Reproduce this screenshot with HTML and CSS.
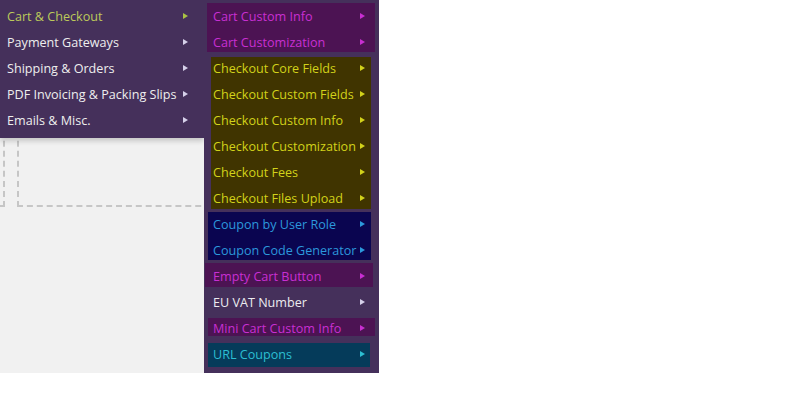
FILE: index.html
```html
<!DOCTYPE html>
<html>
<head>
<meta charset="utf-8">
<link rel="stylesheet" href="styles.css">
</head>
<body>
<div class="screen">
  <div class="content">
    <div class="dash dash-a"></div>
    <div class="dash dash-b"></div>
  </div>

  <ul class="menu">
    <li class="item current"><span>Cart &amp; Checkout</span><i class="arr"></i></li>
    <li class="item"><span>Payment Gateways</span><i class="arr"></i></li>
    <li class="item"><span>Shipping &amp; Orders</span><i class="arr"></i></li>
    <li class="item"><span>PDF Invoicing &amp; Packing Slips</span><i class="arr"></i></li>
    <li class="item"><span>Emails &amp; Misc.</span><i class="arr"></i></li>
  </ul>

  <div class="sub">
    <ul class="grp g-cart">
      <li class="sitem"><span>Cart Custom Info</span><i class="arr"></i></li>
      <li class="sitem"><span>Cart Customization</span><i class="arr"></i></li>
    </ul>
    <ul class="grp g-check">
      <li class="sitem"><span>Checkout Core Fields</span><i class="arr"></i></li>
      <li class="sitem"><span>Checkout Custom Fields</span><i class="arr"></i></li>
      <li class="sitem"><span>Checkout Custom Info</span><i class="arr"></i></li>
      <li class="sitem"><span>Checkout Customization</span><i class="arr"></i></li>
      <li class="sitem"><span>Checkout Fees</span><i class="arr"></i></li>
      <li class="sitem"><span>Checkout Files Upload</span><i class="arr"></i></li>
    </ul>
    <ul class="grp g-coupon">
      <li class="sitem"><span>Coupon by User Role</span><i class="arr"></i></li>
      <li class="sitem"><span>Coupon Code Generator</span><i class="arr"></i></li>
    </ul>
    <ul class="grp g-empty">
      <li class="sitem"><span>Empty Cart Button</span><i class="arr"></i></li>
    </ul>
    <ul class="grp g-vat">
      <li class="sitem"><span>EU VAT Number</span><i class="arr"></i></li>
    </ul>
    <ul class="grp g-mini">
      <li class="sitem"><span>Mini Cart Custom Info</span><i class="arr"></i></li>
    </ul>
    <ul class="grp g-url">
      <li class="sitem"><span>URL Coupons</span><i class="arr"></i></li>
    </ul>
  </div>
</div>
</body>
</html>
```

FILE: styles.css
```css
* { box-sizing: border-box; }
html, body { margin: 0; padding: 0; background: #ffffff; }
body {
  font-family: "Open Sans", "Noto Sans", "Liberation Sans", sans-serif;
  font-size: 12.6px;
}
ul { list-style: none; margin: 0; padding: 0; }

.screen {
  position: relative;
  width: 379px;
  height: 373px;
  background: #f1f1f1;
  overflow: hidden;
}

.content {
  display: flex;
  gap: 12px;
}
.dash {
  height: 207px;
  border: 2px dashed #c6c6c6;
}
.dash-a { width: 100px; margin-left: -95px; flex: none; }
.dash-b { flex: 1; margin-right: -40px; }

.arr {
  display: block;
  width: 0;
  height: 0;
  border-left: 5px solid #d6d0ea;
  border-top: 3.5px solid transparent;
  border-bottom: 3.5px solid transparent;
  flex: none;
}

.menu {
  position: absolute;
  left: 0;
  top: 0;
  width: 204px;
  padding: 3px 0 5px;
  background: #45305b;
  box-shadow: 0 3px 5px rgba(0, 0, 0, 0.18);
}
.item, .sitem {
  height: 26px;
  display: flex;
  align-items: center;
  justify-content: space-between;
  white-space: nowrap;
  flex: none;
}
.item {
  padding: 0 16px 0 7px;
  color: #eeeeee;
}
.item.current { color: #bcc95a; }
.item.current .arr { border-left-color: #a9c244; }

.sub {
  position: absolute;
  left: 204px;
  top: 0;
  width: 175px;
  height: 373px;
  padding-top: 3px;
  background: #45305b;
  display: flex;
  flex-direction: column;
}
.grp {
  display: flex;
  flex-direction: column;
  flex: none;
}

.g-cart { margin: 0 4px 0 3px; background: #4c1353; color: #c82fd2; }
.g-cart .sitem { padding: 0 10px 0 6px; }
.g-cart .sitem:last-child { margin-bottom: -3px; }
.g-cart .arr { border-left-color: #c82fd2; }

.g-check { margin: 5px 8px 0 7px; background: #403400; color: #d2d21a; }
.g-check .sitem { padding: 0 6px 0 2px; }
.g-check .sitem:first-child { margin-top: -2px; }
.g-check .sitem:last-child { margin-bottom: -2px; }
.g-check .arr { border-left-color: #d2d21a; }

.g-coupon { margin: 3px 8px 0 4px; background: #0a0550; color: #2c98dc; }
.g-coupon .sitem { padding: 0 6px 0 5px; }
.g-coupon .sitem:first-child { margin-top: -1px; }
.g-coupon .sitem:last-child { margin-bottom: -3px; }
.g-coupon .arr { border-left-color: #2c98dc; }

.g-empty { margin: 3px 6px 0 1px; background: #4c1353; color: #c82fd2; }
.g-empty .sitem { padding: 0 8px 0 8px; margin-bottom: -2px; }
.g-empty .arr { border-left-color: #c82fd2; }

.g-vat { margin: 2px 0 0 0; color: #ececf0; }
.g-vat .sitem { padding: 0 14px 0 9px; }

.g-mini { margin: 3px 4px 0 4px; background: #4c1353; color: #c82fd2; }
.g-mini .sitem { padding: 0 10px 0 5px; margin-top: -3px; margin-bottom: -5px; }
.g-mini .arr { border-left-color: #c82fd2; }

.g-url { margin: 7px 9px 0 4px; background: #053b5a; color: #2cbfd2; }
.g-url .sitem { padding: 0 5px 0 5px; margin-top: -2px; }
.g-url .arr { border-left-color: #2cbfd2; }
```
